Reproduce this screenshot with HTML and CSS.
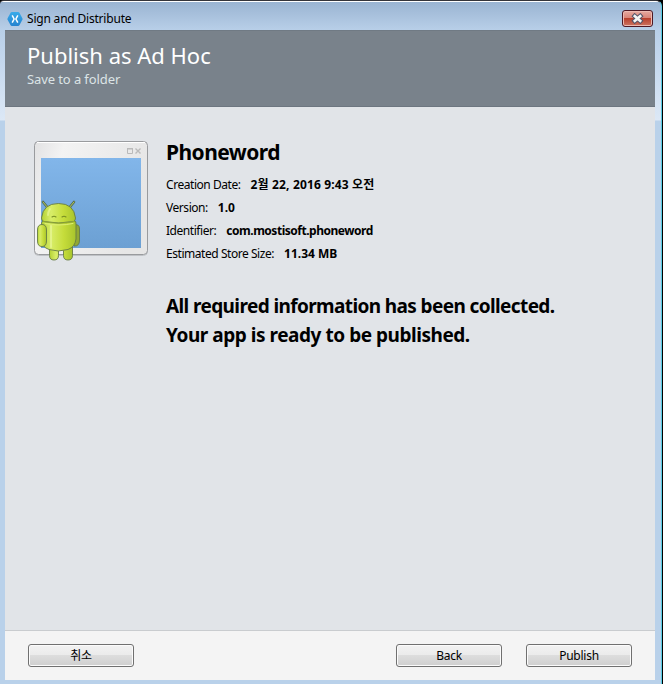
FILE: index.html
```
<!DOCTYPE html>
<html lang="ko">
<head>
<meta charset="utf-8">
<title>Sign and Distribute</title>
<link rel="stylesheet" href="styles.css">
</head>
<body>
<div class="window">
  <header class="titlebar">
    <svg class="app-icon" width="16" height="16" viewBox="0 0 16 16">
      <defs><linearGradient id="hex" x2="0" y2="1"><stop offset="0" stop-color="#39abea"/><stop offset="1" stop-color="#2583cf"/></linearGradient></defs>
      <path d="M4.800 1h6.400q.8 0 1.200.7l3 5.500q.4.8 0 1.600l-3 5.500q-.4.7-1.200.7H4.800q-.8 0-1.200-.7l-3-5.500q-.4-.8 0-1.600l3-5.500Q4 1 4.800 1z" fill="url(#hex)"/>
      <path d="M5.200 4.300 7.100 8 5.200 11.700M10.800 4.300 8.900 8l1.900 3.700" fill="none" stroke="#fff" stroke-width="1.500"/>
    </svg>
    <span class="window-title">Sign and Distribute</span>
    <button class="close" aria-label="Close">
      <svg width="13" height="11" viewBox="0 0 13 11"><path d="M2 1.500 11 9.500M11 1.500 2 9.500" stroke="#555569" stroke-width="4.600"/><path d="M2.800 2.200 10.200 8.800M10.200 2.200 2.800 8.800" stroke="#f5f5f5" stroke-width="2.600"/></svg>
    </button>
  </header>
  <section class="banner">
    <h1>Publish as Ad Hoc</h1>
    <p>Save to a folder</p>
  </section>
  <main class="content">
    <svg class="package" width="120" height="124" viewBox="0 0 120 124">
      <defs>
        <linearGradient id="screen" x2="0" y2="1"><stop offset="0" stop-color="#82b6ea"/><stop offset="1" stop-color="#6ca0d3"/></linearGradient>
        <linearGradient id="frame" x2="1" y2=".3"><stop offset="0" stop-color="#e2e2e3"/><stop offset=".25" stop-color="#f3f3f3"/><stop offset="1" stop-color="#e6e6e6"/></linearGradient>
        <linearGradient id="green"><stop offset="0" stop-color="#b4d233"/><stop offset=".28" stop-color="#d8ed68"/><stop offset=".65" stop-color="#c5dc3a"/><stop offset="1" stop-color="#a8c42c"/></linearGradient>
      </defs>
      <rect x="3.500" y="3.500" width="113" height="113" rx="4" fill="none" stroke="#bfc2c6"/>
      <rect x="3.500" y="2.500" width="113" height="113" rx="4" fill="url(#frame)" stroke="#999b9e"/>
      <path d="M6 3.500H114" stroke="#fff"/>
      <rect x="10" y="19" width="100" height="90" fill="url(#screen)"/>
      <path d="M96.500 10v4.500h5V10zM96 9.500h6" fill="none" stroke="#bababa"/>
      <path d="M104.500 9.500l5 5m0-5-5 5" stroke="#bababa" stroke-width="1.400"/>
      <g transform="translate(2)">
        <g fill="none" stroke-linecap="round">
          <path d="M15 69l-5-6M36 69l5-6" stroke="#526a58" stroke-width="2.600"/>
          <path d="M15 69l-5-6M36 69l5-6" stroke="#b4ca54" stroke-width="1"/>
        </g>
        <g stroke="#657b45" stroke-width=".9" fill="url(#green)">
          <path d="M16.500 108v8.500q0 4.500 4.500 4.500t4.500-4.500V108zM30.500 108v8.500q0 4.500 4.500 4.500t4.500-4.500V108z"/>
          <path d="M41 86q5.500-1.500 5.500 4v11q0 6.500-5.500 6z" fill="#92a934"/>
          <path d="M10 82h32q1 0 1 3v15q-1 8-8 10.500-10 3-19 0Q8.500 108 8.500 100V85q0-2 1.500-3z"/>
          <path d="M4.500 91q0-5.500 4.500-5.500t4.500 5.500v11q0 5.500-4.500 5.500t-4.500-5.500z"/>
          <path d="M8.500 79Q10 64.500 25.500 64.500T42.500 79q0 3-2 3.500-15 3-29.500 0-2.500-.5-2.500-3.500z"/>
        </g>
        <g fill="none" stroke-linecap="round">
          <path d="M19 78q2-1.500 4 0m6 0q2-1.500 4 0" stroke="#788e24" stroke-width="1.100"/>
          <path d="M10 82.500q15.500 3.500 31 0" stroke="#91aa32"/>
          <path d="M12 84.500q14 3 28 0" stroke="#def072"/>
          <path d="M18 87v21M17 70q-2 3-2 6" stroke="#e9f79b" stroke-width="2" opacity=".65"/>
        </g>
      </g>
    </svg>
    <div class="details">
      <h2>Phoneword</h2>
      <dl>
        <div><dt>Creation Date:</dt><dd class="date">2월 22, 2016 9:43 오전</dd></div>
        <div><dt>Version:</dt><dd class="version">1.0</dd></div>
        <div><dt>Identifier:</dt><dd class="package-name">com.mostisoft.phoneword</dd></div>
        <div><dt>Estimated Store Size:</dt><dd class="bytes">11.34 MB</dd></div>
      </dl>
      <p class="ready">All required information has been collected.<br><span>Your app is ready to be published.</span></p>
    </div>
  </main>
  <footer class="actions">
    <button class="cancel">취소</button>
    <button>Back</button>
    <button>Publish</button>
  </footer>
</div>
</body>
</html>
```
FILE: styles.css
```
* { box-sizing: border-box; }
body { margin: 0; background: #000; font-family: "Noto Sans", "Noto Sans CJK KR", sans-serif; font-size: 12px; color: #000; }
h1, h2, p, dl, dd { margin: 0; }
.window { width: 662px; height: 684px; display: flex; flex-direction: column; padding: 0 6px 4px 5px; border-top: 1px solid #34343a; border-right: 1px solid #58cce4; border-radius: 4px 6px 0 0; background: linear-gradient(#fff 0 1px, #9ab4d2 1px, #b8cfe8 29px, #c8daef 70px, #dce8f6 119px, #b9d1ea 120px); }
.titlebar { height: 29px; flex: none; display: flex; align-items: center; padding: 6px 2px 0 2px; }
.app-icon { flex: none; }
.window-title { margin-left: 4px; line-height: 18px; letter-spacing: -.2px; white-space: nowrap; }
.close { width: 31px; height: 17px; margin-left: auto; display: flex; align-items: center; justify-content: center; padding: 0; border: 1px solid #4d1824; border-radius: 3px; background: linear-gradient(#e6aaa1, #d98579 45%, #b8402d 50%, #cc7461); box-shadow: inset 0 0 0 1px #edbab1; }
.banner { height: 77px; flex: none; padding: 12px 22px; background: #79828b; color: #fff; border-top: 1px solid #707a84; border-bottom: 1px solid #6d7680; }
h1 { font-size: 22px; line-height: 25px; font-weight: 400; letter-spacing: 0; }
.banner p { margin-top: 1px; color: #dce4e6; font-size: 13px; line-height: 20px; letter-spacing: -.1px; }
.content { flex: 1; min-height: 0; display: flex; align-items: flex-start; background: #e1e4e8; padding: 32px 0 0 26px; }
.package { flex: none; }
.details { margin-left: 15px; }
h2 { font-size: 21px; line-height: 26px; letter-spacing: -.55px; }
dl { margin-top: 8px; }
dl div { display: flex; height: 23px; line-height: 23px; white-space: nowrap; }
dt { margin-right: 10px; letter-spacing: -.45px; }
dd { font-weight: 700; letter-spacing: -.3px; }
.date { letter-spacing: .15px; }
.version { letter-spacing: 0; }
.package-name { letter-spacing: -.48px; }
.bytes { letter-spacing: 0; }
.ready { margin-top: 27px; font-size: 19px; line-height: 29px; font-weight: 700; letter-spacing: -.61px; white-space: nowrap; }
.ready span { letter-spacing: -.46px; }
.actions { height: 50px; flex: none; display: flex; align-items: flex-start; padding: 13px 23px 0; border-top: 1px solid #c9cccf; background: #f4f4f4; }
.actions button { width: 106px; height: 23px; padding: 0; border: 1px solid #707070; border-radius: 3px; background: linear-gradient(#f2f2f2, #ebebeb 49%, #dddddd 50%, #cfcfcf); box-shadow: inset 0 0 0 1px #fbfbfb; font: inherit; line-height: 20px; letter-spacing: -.25px; color: #000; }
.actions .cancel { margin-right: auto; }
.actions button + button + button { margin-left: 24px; }
```
